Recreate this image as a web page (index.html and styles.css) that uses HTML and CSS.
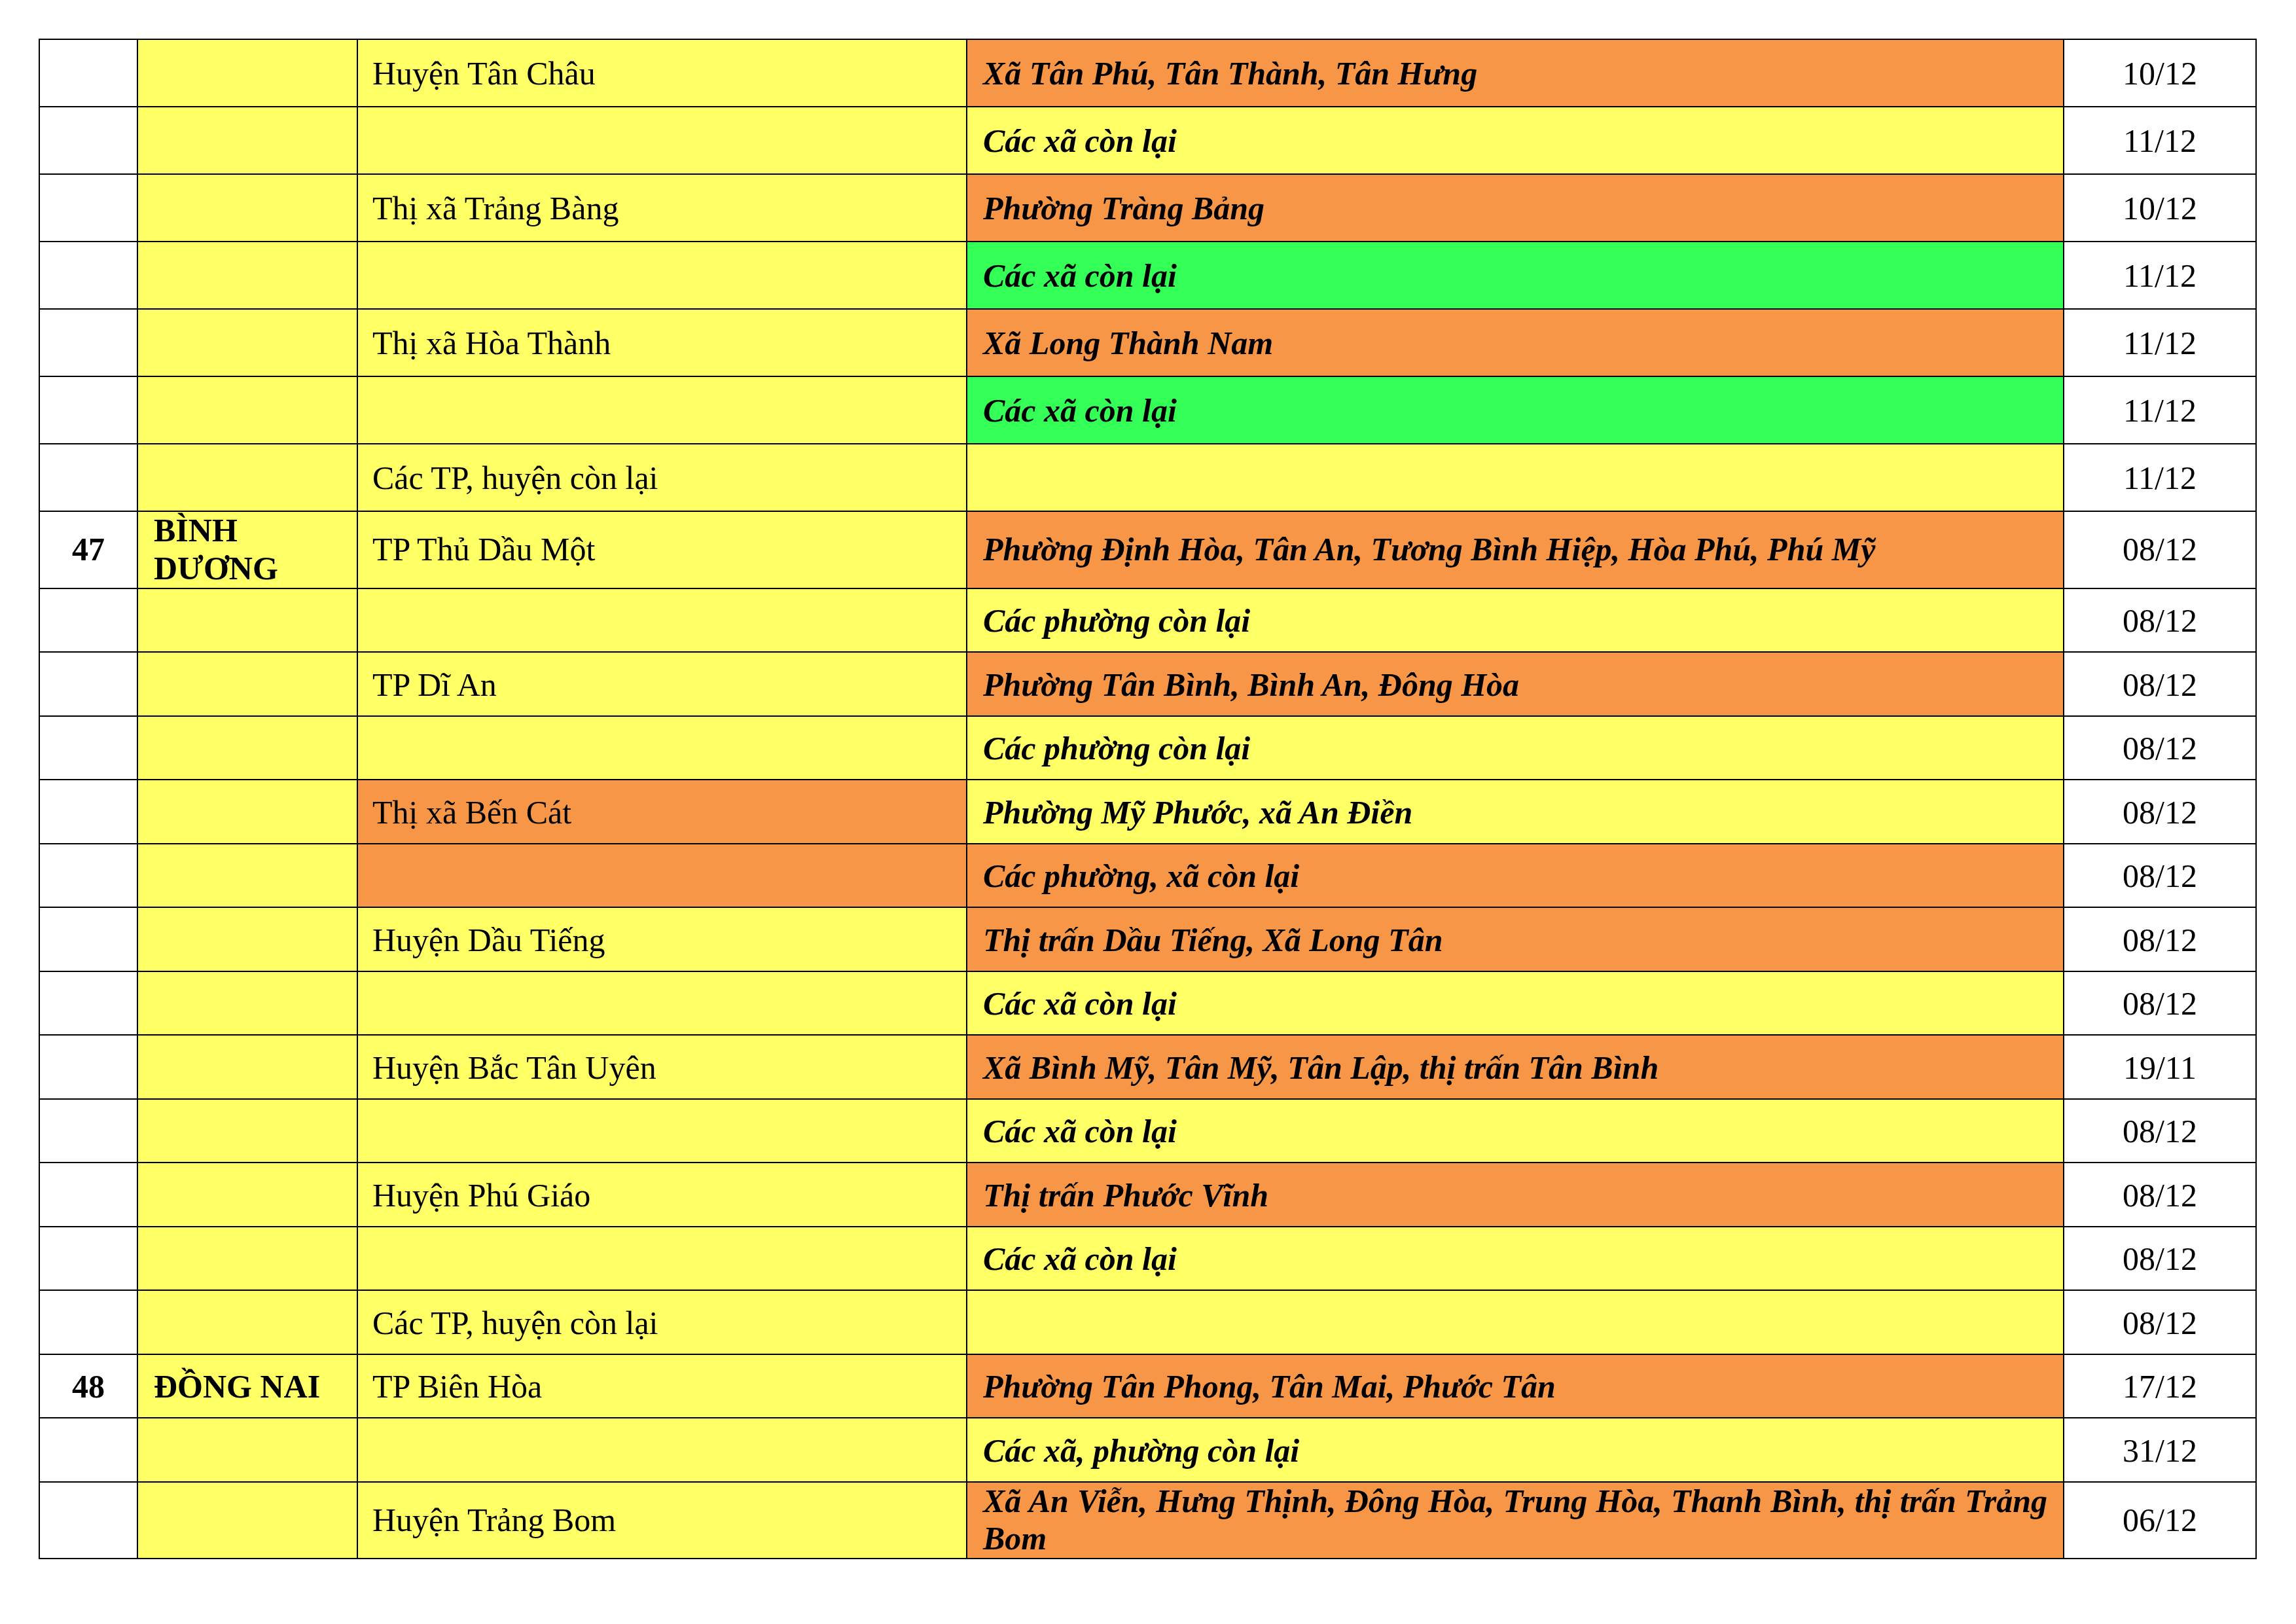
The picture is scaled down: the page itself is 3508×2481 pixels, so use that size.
FILE: index.html
```html
<!DOCTYPE html>
<html lang="vi">
<head>
<meta charset="utf-8">
<title>Bảng</title>
<link rel="stylesheet" href="styles.css">
</head>
<body>
<div class="page">
<table class="grid">
<colgroup>
<col class="c1"><col class="c2"><col class="c3"><col class="c4"><col class="c5">
</colgroup>
<tbody>
<tr class="ra"><td class="no"></td><td class="prov y"></td><td class="dist y">Huyện Tân Châu</td><td class="ward o">Xã Tân Phú, Tân Thành, Tân Hưng</td><td class="date">10/12</td></tr>
<tr class="ra"><td class="no"></td><td class="prov y"></td><td class="dist y"></td><td class="ward y">Các xã còn lại</td><td class="date">11/12</td></tr>
<tr class="ra"><td class="no"></td><td class="prov y"></td><td class="dist y">Thị xã Trảng Bàng</td><td class="ward o">Phường Tràng Bảng</td><td class="date">10/12</td></tr>
<tr class="ra"><td class="no"></td><td class="prov y"></td><td class="dist y"></td><td class="ward g">Các xã còn lại</td><td class="date">11/12</td></tr>
<tr class="ra"><td class="no"></td><td class="prov y"></td><td class="dist y">Thị xã Hòa Thành</td><td class="ward o">Xã Long Thành Nam</td><td class="date">11/12</td></tr>
<tr class="ra"><td class="no"></td><td class="prov y"></td><td class="dist y"></td><td class="ward g">Các xã còn lại</td><td class="date">11/12</td></tr>
<tr class="ra"><td class="no"></td><td class="prov y"></td><td class="dist y">Các TP, huyện còn lại</td><td class="ward y"></td><td class="date">11/12</td></tr>
<tr class="rc"><td class="no">47</td><td class="prov y">BÌNH DƯƠNG</td><td class="dist y">TP Thủ Dầu Một</td><td class="ward o">Phường Định Hòa, Tân An, Tương Bình Hiệp, Hòa Phú, Phú Mỹ</td><td class="date">08/12</td></tr>
<tr class="rb"><td class="no"></td><td class="prov y"></td><td class="dist y"></td><td class="ward y">Các phường còn lại</td><td class="date">08/12</td></tr>
<tr class="rb"><td class="no"></td><td class="prov y"></td><td class="dist y">TP Dĩ An</td><td class="ward o">Phường Tân Bình, Bình An, Đông Hòa</td><td class="date">08/12</td></tr>
<tr class="rb"><td class="no"></td><td class="prov y"></td><td class="dist y"></td><td class="ward y">Các phường còn lại</td><td class="date">08/12</td></tr>
<tr class="rb"><td class="no"></td><td class="prov y"></td><td class="dist o">Thị xã Bến Cát</td><td class="ward y">Phường Mỹ Phước, xã An Điền</td><td class="date">08/12</td></tr>
<tr class="rb"><td class="no"></td><td class="prov y"></td><td class="dist o"></td><td class="ward o">Các phường, xã còn lại</td><td class="date">08/12</td></tr>
<tr class="rb"><td class="no"></td><td class="prov y"></td><td class="dist y">Huyện Dầu Tiếng</td><td class="ward o">Thị trấn Dầu Tiếng, Xã Long Tân</td><td class="date">08/12</td></tr>
<tr class="rb"><td class="no"></td><td class="prov y"></td><td class="dist y"></td><td class="ward y">Các xã còn lại</td><td class="date">08/12</td></tr>
<tr class="rb"><td class="no"></td><td class="prov y"></td><td class="dist y">Huyện Bắc Tân Uyên</td><td class="ward o">Xã Bình Mỹ, Tân Mỹ, Tân Lập, thị trấn Tân Bình</td><td class="date">19/11</td></tr>
<tr class="rb"><td class="no"></td><td class="prov y"></td><td class="dist y"></td><td class="ward y">Các xã còn lại</td><td class="date">08/12</td></tr>
<tr class="rb"><td class="no"></td><td class="prov y"></td><td class="dist y">Huyện Phú Giáo</td><td class="ward o">Thị trấn Phước Vĩnh</td><td class="date">08/12</td></tr>
<tr class="rb"><td class="no"></td><td class="prov y"></td><td class="dist y"></td><td class="ward y">Các xã còn lại</td><td class="date">08/12</td></tr>
<tr class="rb"><td class="no"></td><td class="prov y"></td><td class="dist y">Các TP, huyện còn lại</td><td class="ward y"></td><td class="date">08/12</td></tr>
<tr class="rb"><td class="no">48</td><td class="prov y">ĐỒNG NAI</td><td class="dist y">TP Biên Hòa</td><td class="ward o">Phường Tân Phong, Tân Mai, Phước Tân</td><td class="date">17/12</td></tr>
<tr class="rb"><td class="no"></td><td class="prov y"></td><td class="dist y"></td><td class="ward y">Các xã, phường còn lại</td><td class="date">31/12</td></tr>
<tr class="rc"><td class="no"></td><td class="prov y"></td><td class="dist y">Huyện Trảng Bom</td><td class="ward o">Xã An Viễn, Hưng Thịnh, Đông Hòa, Trung Hòa, Thanh Bình, thị trấn Trảng Bom</td><td class="date">06/12</td></tr>
</tbody>
</table>
</div>
</body>
</html>
```

FILE: styles.css
```css
html, body {
  margin: 0;
  padding: 0;
  background: #ffffff;
}
.page {
  padding: 59px 0 0 59px;
}
.grid {
  border-collapse: collapse;
  table-layout: fixed;
  width: 3389px;
  font-family: "Liberation Serif", "Times New Roman", serif;
  font-size: 50px;
  line-height: 57.5px;
  color: #000;
}
.c1 { width: 150px; }
.c2 { width: 336px; }
.c3 { width: 931px; }
.c4 { width: 1676px; }
.c5 { width: 294px; }
.grid td {
  border: 2px solid #000;
  padding: 3px 22px 0 22px;
  vertical-align: middle;
  background: #ffffff;
}
.ra { height: 103px; }
.rb { height: 97.5px; }
.rc { height: 117.5px; }
.rc td { padding-top: 0; }
.grid td.no {
  text-align: center;
  font-weight: bold;
  padding-left: 0;
  padding-right: 0;
}
.grid td.prov {
  font-weight: bold;
  padding-left: 24px;
}
.grid td.dist {
  padding-left: 22px;
}
.grid td.ward {
  font-weight: bold;
  font-style: italic;
  text-align: justify;
  padding-left: 24px;
  padding-right: 24px;
}
.grid td.date {
  text-align: center;
  padding-left: 0;
  padding-right: 0;
}
.grid td.y { background: #ffff66; }
.grid td.o { background: #f79646; }
.grid td.g { background: #33ff57; }
```
